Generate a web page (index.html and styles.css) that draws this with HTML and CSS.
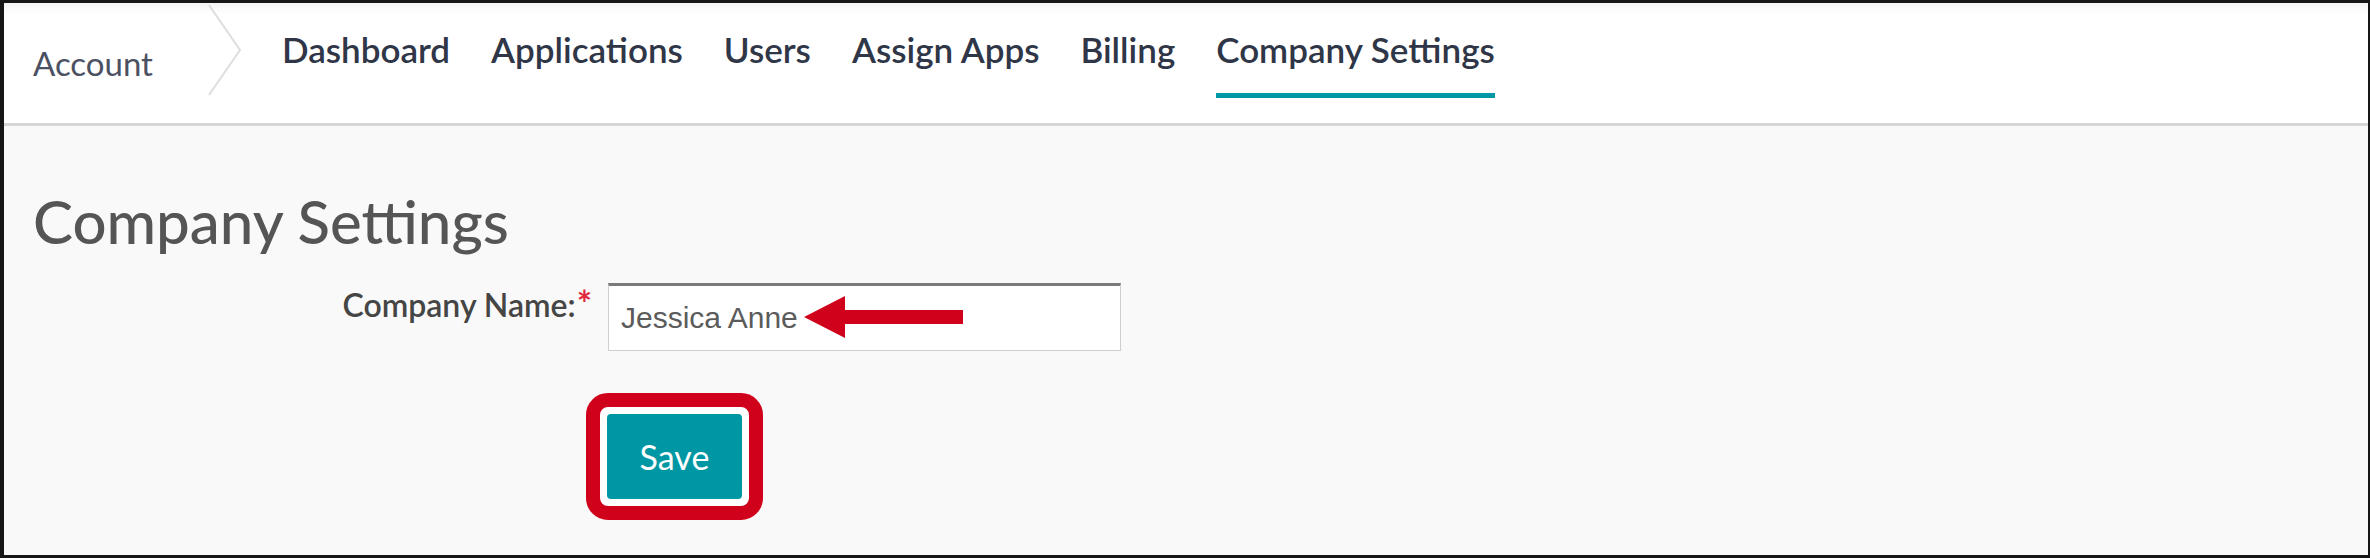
FILE: index.html
```html
<!DOCTYPE html>
<html>
<head>
    <title>Company Settings</title>
    <link rel="stylesheet" href="styles.css">
</head>
<body>
    <div class="frame">
        <div class="topbar">
            <div class="crumb">
                <span class="crumb-label">Account</span>
                <svg class="crumb-chevron" width="34" height="92" viewBox="0 0 34 92">
                    <polyline points="1,0 32,45 1,90" fill="none" stroke="#dedede" stroke-width="2"/>
                </svg>
            </div>
            <nav class="tabs">
                <a class="tab">Dashboard</a>
                <a class="tab">Applications</a>
                <a class="tab">Users</a>
                <a class="tab">Assign Apps</a>
                <a class="tab">Billing</a>
                <a class="tab active">Company Settings</a>
            </nav>
        </div>

        <div class="content">
            <h1>Company Settings</h1>

            <div class="form-row">
                <label for="companyName">Company Name:<span class="req">*</span></label>
                <div class="field">
                    <input type="text" id="companyName" value="Jessica Anne">
                    <svg class="pointer" width="160" height="42" viewBox="0 0 160 42">
                        <polygon points="0,21 41,0 41,14 159,14 159,28 41,28 41,42" fill="#d0021b"/>
                    </svg>
                </div>
            </div>

            <div class="actions">
                <span class="highlight">
                    <button class="save">Save</button>
                </span>
            </div>
        </div>
    </div>
</body>
</html>
```

FILE: styles.css
```css
html, body {
    margin: 0;
    padding: 0;
}

body {
    font-family: 'Lato', 'Noto Sans', sans-serif;
    background-color: #ffffff;
}

.frame {
    box-sizing: border-box;
    height: 558px;
    border: 3px solid #161616;
    border-left-width: 4px;
    border-right-width: 2px;
    background-color: #f9f9f9;
    display: flex;
    flex-direction: column;
}

/* top navigation */
.topbar {
    height: 120px;
    background-color: #ffffff;
    border-bottom: 3px solid #d6d6d6;
    box-shadow: inset 0 10px 12px -8px rgba(0, 0, 0, 0.07);
    display: flex;
    align-items: flex-start;
}

.crumb {
    display: flex;
    align-items: flex-start;
    padding-left: 29px;
    padding-top: 2px;
}

.crumb-label {
    font-size: 33px;
    color: #4b5162;
    margin-top: 38px;
    width: 175px;
}

.crumb-chevron {
    display: block;
}

.tabs {
    display: flex;
    margin-left: 40px;
    gap: 41px;
}

.tab {
    font-size: 35px;
    font-weight: 600;
    color: #2f3647;
    padding-top: 25px;
    box-sizing: border-box;
    border-bottom: 5px solid transparent;
    height: 95px;
}

.tab.active {
    border-bottom-color: #0098a6;
}

/* page body */
.content {
    padding: 0 0 0 29px;
}

h1 {
    font-size: 60px;
    font-weight: 500;
    color: #555555;
    margin: 65px 0 0 0;
    line-height: 1;
}

.form-row {
    display: flex;
    align-items: flex-start;
    margin-top: 32px;
}

label {
    width: 559px;
    text-align: right;
    font-size: 32px;
    font-weight: 600;
    color: #454545;
    padding-top: 2px;
    box-sizing: border-box;
}

.req {
    color: #e0283f;
    font-size: 36px;
    font-weight: 700;
    line-height: 1;
    vertical-align: top;
    margin-left: 1px;
}

.field {
    position: relative;
    margin-left: 16px;
}

input[type="text"] {
    display: block;
    box-sizing: border-box;
    width: 513px;
    height: 68px;
    padding: 0 12px 0;
    font-family: 'Liberation Sans', Arial, sans-serif;
    font-size: 30px;
    color: #5b5b5b;
    background-color: #ffffff;
    border: 1px solid #cfcfcf;
    border-top: 3px solid #7a7a7a;
    outline: none;
}

.pointer {
    position: absolute;
    left: 196px;
    top: 13px;
}

.actions {
    margin-top: 42px;
    padding-left: 553px;
}

.highlight {
    display: inline-block;
    border: 14px solid #d0021b;
    border-radius: 22px;
    padding: 7px;
    background-color: #ffffff;
}

.save {
    display: block;
    width: 135px;
    height: 85px;
    background-color: #0097a4;
    color: #ffffff;
    font-family: 'Lato', 'Noto Sans', sans-serif;
    font-size: 34px;
    border: none;
    border-radius: 4px;
    cursor: pointer;
}
```
